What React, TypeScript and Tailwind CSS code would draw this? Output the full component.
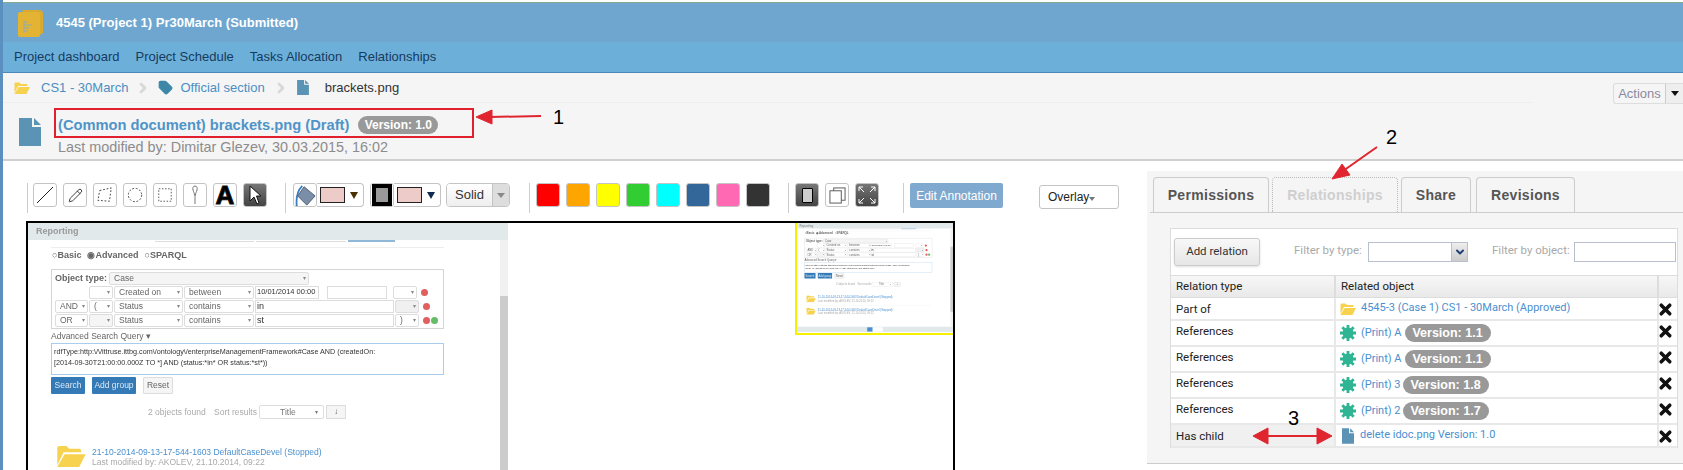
import { ReactNode } from 'react';
import { ChevronRight, Pencil, Tag, X, ChevronDown } from 'lucide-react';

const swatches = ['bg-[#ff0000]', 'bg-[#ffa500]', 'bg-[#ffff00]', 'bg-[#32cd32]', 'bg-[#00ffff]', 'bg-[#336699]', 'bg-[#ff69b4]', 'bg-[#333333]'];

const relations = [
  { type: 'References', name: '(Print) A', version: '1.1', gap: 'ml-[3px]' },
  { type: 'References', name: '(Print) A', version: '1.1', gap: 'ml-[3px]' },
  { type: 'References', name: '(Print) 3', version: '1.8', gap: 'ml-[2px]' },
  { type: 'References', name: '(Print) 2', version: '1.7', gap: 'ml-[2px]' },
];

function DocIcon({ className }: { className: string }) {
  return (
    <svg viewBox="0 0 22 28" className={className} fill="#5b93b5">
      <path d="M0 0H13V9H22V28H0Z" />
      <path d="M15 0L22 7H15Z" />
    </svg>
  );
}

function FolderIcon({ className }: { className: string }) {
  return (
    <svg viewBox="0 0 32 24" className={className} fill="#f7d24f">
      <path d="M1 22V3Q1 1 3 1H11L14 4H25Q27 4 27 6V8H8L1 22Z" />
      <path d="M9 10H32L25 24H1Z" />
    </svg>
  );
}

function StarIcon() {
  return (
    <svg viewBox="0 0 16 16" className="h-[16px] w-[16px] shrink-0" fill="none" stroke="#2fb593" strokeWidth="2.8">
      <circle cx="8" cy="8" r="5.5" fill="#2fb593" stroke="none" />
      <path d="M8 0V16M0 8H16M2.3 2.3L13.7 13.7M13.7 2.3L2.3 13.7" />
    </svg>
  );
}

function ToolBtn({ children, dark }: { children: ReactNode; dark?: boolean }) {
  return (
    <div className={`flex h-[24px] w-[24px] items-center justify-center rounded-[3px] border border-[#c4c4c4] ${dark ? 'bg-gradient-to-b from-[#777777] to-[#444444]' : 'bg-white'}`}>
      {children}
    </div>
  );
}

function Separator() {
  return <div className="h-[30px] w-px shrink-0 bg-[#cccccc]" />;
}

function ColorPick({ caret }: { caret: string }) {
  return (
    <div className="flex h-[24px] w-[47px] items-center rounded-r-[4px] border border-l-0 border-[#c4c4c4] bg-white pl-[3px]">
      <div className="h-[16px] w-[25px] border border-[#222] bg-[#eccbc9]" />
      <svg viewBox="0 0 8 8" className="ml-[5px] h-[8px] w-[8px]"><path d="M0 1H8L4 8Z" fill={caret} /></svg>
    </div>
  );
}

function Toolbar() {
  return (
    <div className="flex h-[38px] items-start pl-[24px]">
      <Separator />
      <div className="ml-[5px] flex gap-[6px]">
        <ToolBtn>
          <svg viewBox="0 0 18 18" className="h-[18px] w-[18px]" stroke="#222" fill="none"><path d="M1 17L17 1" /></svg>
        </ToolBtn>
        <ToolBtn><Pencil className="h-[15px] w-[15px] text-[#333]" strokeWidth={1.5} /></ToolBtn>
        <ToolBtn>
          <svg viewBox="0 0 18 18" className="h-[16px] w-[16px]" stroke="#333" fill="none" strokeDasharray="2 2"><path d="M3 4L16 1L14 16L1 15Z" /></svg>
        </ToolBtn>
        <ToolBtn>
          <svg viewBox="0 0 18 18" className="h-[16px] w-[16px]" stroke="#333" fill="none" strokeDasharray="2 2"><circle cx="9" cy="9" r="7.5" /></svg>
        </ToolBtn>
        <ToolBtn>
          <svg viewBox="0 0 18 18" className="h-[14px] w-[14px]" stroke="#333" fill="none" strokeDasharray="2 2"><rect x="1" y="1" width="16" height="16" /></svg>
        </ToolBtn>
        <ToolBtn>
          <svg viewBox="0 0 12 20" className="h-[20px] w-[12px]" stroke="#555" strokeWidth="0.8" fill="none"><path d="M6 1C4 1 3.500 3 4 5C4.500 7 5.500 8 5.500 10H6.500C6.500 8 7.500 7 8 5C8.500 3 8 1 6 1ZM6 10V19" /></svg>
        </ToolBtn>
        <ToolBtn>
          <span className="text-[26px] font-bold leading-[22px] text-black [-webkit-text-stroke:1px_#111]">A</span>
        </ToolBtn>
        <ToolBtn dark>
          <svg viewBox="0 0 14 20" className="h-[20px] w-[14px]" fill="white" stroke="#111"><path d="M2 1V16L6 12L9 19L11 18L8.500 11H13Z" /></svg>
        </ToolBtn>
      </div>
      <div className="ml-[18px]"><Separator /></div>
      <div className="ml-[7px] flex">
        <ToolBtn>
          <svg viewBox="0 0 24 24" className="h-[22px] w-[22px] shrink-0">
            <path d="M3 24C2 14 5 6 9 2" stroke="#3a80c0" strokeWidth="2" fill="none" />
            <path d="M11 3L23 13L14 23L4 13Z" fill="#7b8ea8" stroke="#4a5a70" />
          </svg>
        </ToolBtn>
        <ColorPick caret="#4a3000" />
      </div>
      <div className="ml-[6px] flex">
        <ToolBtn>
          <div className="flex h-[22px] w-[20px] items-center justify-center bg-black">
            <div className="h-[14px] w-[12px] bg-[#999999]" />
          </div>
        </ToolBtn>
        <ColorPick caret="#10294f" />
      </div>
      <div className="ml-[5px] flex h-[24px] w-[64px] overflow-hidden rounded-[4px] border border-[#c4c4c4] text-[13px] text-[#333]">
        <div className="flex w-[45px] items-center justify-center bg-gradient-to-b from-white to-[#eeeeee]">Solid</div>
        <div className="flex flex-1 items-center justify-center border-l border-[#c4c4c4] bg-[#dddddd]">
          <div className="h-0 w-0 border-x-[4px] border-t-[5px] border-x-transparent border-t-[#888]" />
        </div>
      </div>
      <div className="ml-[19px]"><Separator /></div>
      <div className="ml-[6px] flex gap-[6px]">
        {swatches.map((color) => (
          <div key={color} className={`h-[24px] w-[24px] rounded-[3px] border border-[#c4c4c4] ${color}`} />
        ))}
      </div>
      <div className="ml-[18px]"><Separator /></div>
      <div className="ml-[6px] flex gap-[6px]">
        <ToolBtn dark>
          <div className="h-[15px] w-[11px] rounded-[1px] border border-black bg-[#cccccc]" />
        </ToolBtn>
        <ToolBtn>
          <svg viewBox="0 0 18 18" className="h-[17px] w-[17px]" fill="white" stroke="#555"><rect x="5" y="1" width="12" height="13" /><rect x="1" y="4" width="12" height="13" /></svg>
        </ToolBtn>
        <ToolBtn dark>
          <svg viewBox="0 0 20 20" className="h-[20px] w-[20px]" stroke="white" fill="none"><path d="M2 2L7 7M2 2V6M2 2H6M18 2L13 7M18 2V6M18 2H14M2 18L7 13M2 18V14M2 18H6M18 18L13 13M18 18V14M18 18H14" /></svg>
        </ToolBtn>
      </div>
      <div className="ml-[24px]"><Separator /></div>
      <div className="ml-[6px] flex h-[25px] w-[93px] items-center justify-center rounded-[2px] bg-[#7fa9cf] text-[12px] text-white">Edit Annotation</div>
      <div className="ml-[36px] mt-[2px] flex h-[24px] w-[80px] items-center rounded-[3px] border border-[#c4c4c4] bg-white pl-[8px] text-[12px] text-[#222]">
        Overlay
        <div className="mt-[3px] h-0 w-0 border-x-[3px] border-t-[4px] border-x-transparent border-t-[#777]" />
      </div>
    </div>
  );
}

function Field({ w, children, tone }: { w: string; children?: ReactNode; tone?: string }) {
  return (
    <div className={`flex h-[13px] shrink-0 items-center justify-between rounded-[2px] border border-[#dddddd] pl-[4px] pr-[2px] text-[8.500px] font-normal text-[#666] ${w} ${tone ?? 'bg-white'}`}>
      <span className="whitespace-nowrap">{children}</span>
      <span className="text-[6px] text-[#888]">▾</span>
    </div>
  );
}

function Dot({ color }: { color: string }) {
  return <div className={`h-[7px] w-[7px] shrink-0 rounded-full ${color}`} />;
}

function ResultRow() {
  return (
    <>
      <FolderIcon className="h-[22px] w-[32px] shrink-0" />
      <div className="pt-[2px] text-[8.500px] leading-[10px]">
        <div className="whitespace-nowrap text-[#4a90cf]">21-10-2014-09-13-17-544-1603 DefaultCaseDevel (Stopped)</div>
        <div className="whitespace-nowrap text-[#aaa]">Last modified by: AKOLEV, 21.10.2014, 09:22</div>
      </div>
    </>
  );
}

// The scanned page inside the annotation canvas; the overview shows all of it, the canvas only its top
function ReportPage({ overview }: { overview?: boolean }) {
  return (
    <div className={`relative w-[480px] overflow-hidden bg-white blur-[0.5px] ${overview ? 'h-[336px]' : 'h-[248px]'}`}>
      <div className="flex h-[17px] items-center bg-[#e2e9eb] pl-[8px] text-[9px] font-bold text-[#999]">Reporting</div>
      <div className="absolute bottom-0 right-0 top-[17px] w-[8px] bg-[#f1f1f1]">
        <div className="mt-[56px] h-[200px] bg-[#cccccc]" />
      </div>
      <div className="ml-[23px] w-[393px]">
        <div className="flex h-[8px] gap-[2px] border-b border-[#eeeeee] pl-[104px]">
          <div className="h-[2px] w-[99px] border-b border-[#dddddd]" />
          <div className="h-[2px] w-[90px] border-b border-[#dddddd]" />
          <div className="h-[2px] w-[47px] border-b-2 border-[#8fb7d8]" />
        </div>
        <div className="flex h-[16px] items-center gap-[6px] pl-[1px] text-[9px] font-bold text-[#666]">
          <span>○Basic</span><span>◉Advanced</span><span>○SPARQL</span>
        </div>
        <div className="mt-[5px] h-[60px] border border-[#d5d5d5] px-[3px] pt-[2px]">
          <div className="flex h-[13px] items-center gap-[2px] text-[9px] font-bold text-[#666]">
            Object type:
            <Field w="w-[200px]" tone="bg-[#f5f5f5]">Case</Field>
          </div>
          <div className="flex h-[14px] items-center gap-px pl-[34px]">
            <Field w="w-[24px]" />
            <Field w="w-[69px]">Created on</Field>
            <Field w="w-[70px]">between</Field>
            <div className="flex h-[13px] w-[64px] items-center whitespace-nowrap border border-[#dddddd] pl-px text-[7.500px] text-[#333]">10/01/2014 00:00</div>
            <div className="ml-[7px] h-[13px] w-[60px] border border-[#dddddd]" />
            <div className="ml-[5px]"><Field w="w-[24px]" /></div>
            <div className="ml-[3px]"><Dot color="bg-[#e06060]" /></div>
          </div>
          <div className="mt-[1px] flex h-[13px] items-center gap-px">
            <Field w="w-[33px]">AND</Field>
            <Field w="w-[24px]">(</Field>
            <Field w="w-[69px]">Status</Field>
            <Field w="w-[70px]">contains</Field>
            <div className="h-[13px] w-[139px] border border-[#dddddd] pl-px text-[9px] leading-[11px] text-[#333]">in</div>
            <Field w="w-[24px]" tone="bg-[#f0f0f0]" />
            <div className="ml-[3px]"><Dot color="bg-[#e06060]" /></div>
          </div>
          <div className="mt-px flex h-[13px] items-center gap-px">
            <Field w="w-[33px]">OR</Field>
            <Field w="w-[24px]" tone="bg-[#f5f5f5]" />
            <Field w="w-[69px]">Status</Field>
            <Field w="w-[70px]">contains</Field>
            <div className="h-[13px] w-[139px] border border-[#dddddd] pl-px text-[9px] leading-[11px] text-[#333]">st</div>
            <Field w="w-[24px]">)</Field>
            <div className="ml-[3px] flex gap-px"><Dot color="bg-[#e06060]" /><Dot color="bg-[#66bb66]" /></div>
          </div>
        </div>
        <div className="mt-[2px] flex h-[11px] items-center text-[8.500px] text-[#666]">Advanced Search Query ▾</div>
        <div className="mt-[1px] h-[32px] border border-[#a9cdec] pl-[2px] pt-[2px] text-[7.200px] leading-[11px] text-[#333]">
          <div className="whitespace-nowrap">rdfType:http:\/\/ittruse.ittbg.com\/ontology\/enterpriseManagementFramework#Case AND (createdOn:</div>
          <div className="whitespace-nowrap">[2014-09-30T21:00:00.000Z TO *] AND (status:*in* OR status:*st*))</div>
        </div>
        <div className="mt-[2px] flex gap-[7px] text-[8.500px]">
          <div className="flex h-[17px] w-[34px] items-center justify-center rounded-[1px] bg-[#337ab7] text-[#dfe8f2]">Search</div>
          <div className="flex h-[17px] w-[44px] items-center justify-center rounded-[1px] bg-[#337ab7] text-[#dfe8f2]">Add group</div>
          <div className="flex h-[17px] w-[30px] items-center justify-center rounded-[1px] border border-[#dddddd] bg-[#f5f5f5] text-[#666]">Reset</div>
        </div>
        <div className="mt-[11px] flex h-[14px] items-center whitespace-nowrap pl-[97px] text-[8.500px] text-[#aaa]">
          <span className="w-[66px]">2 objects found</span>
          <span className="w-[45px]">Sort results</span>
          <div className="flex h-[14px] w-[65px] items-center justify-between rounded-[2px] border border-[#dddddd] pl-[20px] pr-[5px] text-[#777]">Title<span className="text-[6px]">▾</span></div>
          <div className="ml-[2px] flex h-[14px] w-[20px] items-center justify-center border border-[#dddddd] bg-[#f5f5f5] text-[8px] leading-none text-[#555]">↓</div>
        </div>
        <div className="mt-[26px] flex gap-[5px] pl-[4px]"><ResultRow /></div>
        {overview && <div className="mt-[10px] flex gap-[5px] border-t border-[#eeeeee] pl-[4px] pt-[5px]"><ResultRow /></div>}
      </div>
      {overview && (
        <div className="absolute bottom-0 left-0 right-0 flex h-[17px] items-center justify-center gap-[2px] bg-[#e2e9eb]">
          <div className="h-[13px] w-[16px] bg-[#4a90cf]" />
          <div className="h-[13px] w-[30px] bg-white" />
        </div>
      )}
    </div>
  );
}

function RelationRow({ type, icon, alt, badge, children }: { type: string; icon: ReactNode; alt?: boolean; badge?: boolean; children: ReactNode }) {
  return (
    <div className={`flex border-b-2 border-[#e8e8e8] text-[#222] ${badge ? 'h-[26px]' : 'h-[23px]'}`}>
      <div className={`w-[163px] shrink-0 pl-[5px] ${badge ? 'pt-[2px]' : 'pt-[3px]'} ${alt ? 'bg-[#f0f0f0]' : 'bg-white'}`}>{type}</div>
      <div className="flex w-[323px] shrink-0 items-center border-l-2 border-[#e8e8e8] bg-white pl-[4px]">
        {icon}
        <div className="ml-[5px] flex items-center whitespace-nowrap text-[11px] text-[#4a90d0]">{children}</div>
      </div>
      <div className={`flex flex-1 border-l-2 border-[#e8e8e8] bg-white ${badge ? 'pt-[2px]' : 'pt-[3px]'}`}>
        <X className="-ml-[2px] h-[17px] w-[17px] text-[#111]" strokeWidth={5} />
      </div>
    </div>
  );
}

function RelationsPanel() {
  return (
    <div className="mt-[10px] flex h-[293px] w-[536px] shrink-0 flex-col border-b border-[#cccccc] bg-[#f5f5f5]">
      <div className="ml-[3px] mt-[7px] flex h-[35px] items-end gap-[3px] border-b border-[#cccccc] pl-[3px] text-[14px] font-bold tracking-[0.3px]">
        <div className="flex h-[35px] w-[116px] items-center justify-center rounded-t-[4px] border border-b-0 border-[#cccccc] text-[#555]">Permissions</div>
        <div className="flex h-[35px] w-[126px] items-center justify-center rounded-t-[4px] border border-b-0 border-dotted border-[#bbbbbb] text-[#cfcfcf]">Relationships</div>
        <div className="flex h-[35px] w-[70px] items-center justify-center rounded-t-[4px] border border-b-0 border-[#cccccc] text-[#555]">Share</div>
        <div className="ml-[2px] flex h-[35px] w-[99px] items-center justify-center rounded-t-[4px] border border-b-0 border-[#cccccc] text-[#555]">Revisions</div>
      </div>
      <div className="ml-[23px] mr-[5px] mt-[15px] border border-b-0 border-[#dddddd] bg-white font-['Roboto',sans-serif] text-[11.500px]">
        <div className="flex h-[46px] items-start whitespace-nowrap pl-[3px] pt-[9px] text-[#aaa]">
          <div className="flex h-[28px] w-[86px] items-center justify-center rounded-[3px] border border-[#cccccc] bg-gradient-to-b from-[#f8f8f8] to-[#e6e6e6] text-[#333] shadow-sm">Add relation</div>
          <span className="ml-[34px] mt-[4px] w-[74px]">Filter by type:</span>
          <div className="mt-[4px] flex h-[20px] w-[100px] justify-end border border-[#b8bfcf] bg-white">
            <div className="flex w-[16px] items-center justify-center border-l border-[#b8bfcf] bg-gradient-to-b from-[#eeeeee] to-[#cccccc]">
              <ChevronDown className="h-[12px] w-[12px] text-[#1f3f77]" strokeWidth={4} />
            </div>
          </div>
          <span className="ml-[24px] mt-[4px] w-[82px]">Filter by object:</span>
          <div className="mt-[4px] h-[20px] w-[102px] border border-[#b8bfcf] bg-white" />
        </div>
        <div className="flex h-[23px] items-center border-y border-[#dddddd] bg-gradient-to-b from-[#f7f7f7] to-[#e9e9e9] text-[#222]">
          <div className="w-[163px] shrink-0 pl-[5px]">Relation type</div>
          <div className="h-full w-[323px] shrink-0 border-l-2 border-[#dddddd] pl-[5px] leading-[21px]">Related object</div>
          <div className="h-full flex-1 border-l-2 border-[#dddddd]" />
        </div>
        <RelationRow type="Part of" icon={<FolderIcon className="h-[12px] w-[16px] shrink-0" />}>
          4545-3 (Case 1) CS1 - 30March (Approved)
        </RelationRow>
        {relations.map((rel, i) => (
          <RelationRow key={i} badge type={rel.type} icon={<StarIcon />}>
            {rel.name}
            <span className={`${rel.gap} flex h-[18px] w-[86px] items-center justify-center rounded-full bg-[#999999] font-['Liberation_Sans',sans-serif] text-[12.500px] font-bold text-white`}>Version: {rel.version}</span>
          </RelationRow>
        ))}
        <RelationRow alt type="Has child" icon={<DocIcon className="ml-[2px] mr-[2px] h-[16px] w-[12px] shrink-0" />}>
          <span className="ml-[-1px]">delete idoc.png Version: 1.0</span>
        </RelationRow>
      </div>
    </div>
  );
}

export default function App() {
  return (
    <div className="relative h-[470px] w-full overflow-hidden border-l-[3px] border-[#5b8fbf] bg-white font-['Liberation_Sans',Arial,sans-serif]">
      {/* Title bar */}
      <div className="-mb-[2px] mt-[2px] flex h-[42px] items-center border-y border-dotted border-b-[#a8d0ea] border-t-[#86ad93] bg-[#6ea6cf] pl-[15px]">
        <svg viewBox="0 0 25 28" className="h-[28px] w-[25px]">
          <path d="M4 1H21Q25 1 25 5V24L22 26V6Q22 3 19 3H5Z" fill="#dca92f" />
          <rect x="0" y="3" width="22" height="25" rx="2" fill="#e3b434" />
          <path d="M6 13H10M6 16H14M6 19H11M6 22H10M6 12V24" stroke="#8eaab5" fill="none" />
        </svg>
        <span className="ml-[13px] text-[13px] font-bold text-white">4545 (Project 1) Pr30March (Submitted)</span>
      </div>
      {/* Nav */}
      <div className="flex h-[31px] items-center gap-[16px] border-b border-[#4a8ab8] bg-[#6cb0da] pl-[11px] text-[13px] text-[#173a5e]">
        <span>Project dashboard</span>
        <span>Project Schedule</span>
        <span>Tasks Allocation</span>
        <span>Relationships</span>
      </div>
      {/* Document header */}
      <div className="flex h-[88px] border-b-2 border-[#d0d0d0] bg-[#f5f5f5]">
        <div className="w-[1530px] shrink-0">
          <div className="flex h-[30px] items-center border-b border-[#eeeeee] pl-[11px] text-[13px]">
            <FolderIcon className="h-[12px] w-[16px]" />
            <span className="ml-[11px] text-[#4a8fc4]">CS1 - 30March</span>
            <ChevronRight className="ml-[7px] h-[16px] w-[16px] text-[#d8d8d8]" strokeWidth={4} />
            <Tag className="ml-[7px] h-[15px] w-[15px] fill-[#3d88a8] text-[#3d88a8]" />
            <span className="ml-[7px] text-[#4a8fc4]">Official section</span>
            <ChevronRight className="ml-[8px] h-[16px] w-[16px] text-[#d8d8d8]" strokeWidth={4} />
            <DocIcon className="ml-[8px] h-[15px] w-[12px]" />
            <span className="ml-[16px] text-[#333]">brackets.png</span>
          </div>
          <div className="flex pl-[16px] pt-[15px]">
            <DocIcon className="h-[28px] w-[22px]" />
            <div className="-mt-[4px] ml-[17px]">
              <div className="flex h-[22px] items-center">
                <span className="text-[14.700px] font-bold text-[#4f94c8]">(Common document) brackets.png (Draft)</span>
                <span className="ml-[9px] flex h-[18px] w-[80px] items-center justify-center rounded-full bg-[#999999] text-[12px] font-bold text-white">Version: 1.0</span>
              </div>
              <div className="mt-[1px] text-[14.400px] text-[#8c8c8c]">Last modified by: Dimitar Glezev, 30.03.2015, 16:02</div>
            </div>
          </div>
        </div>
        <div className="flex flex-1 justify-end pt-[10px]">
          <div className="flex h-[21px] w-[70px] overflow-hidden rounded-l-[3px] border border-r-0 border-[#dddddd] text-[13px] text-[#8a8aa0]">
            <div className="flex w-[51px] items-center justify-center">Actions</div>
            <div className="flex flex-1 items-center justify-center border-l border-[#cccccc] bg-[#eeeeee]">
              <div className="h-0 w-0 border-x-[4px] border-t-[5px] border-x-transparent border-t-[#111]" />
            </div>
          </div>
        </div>
      </div>
      {/* Editor and relations */}
      <div className="flex">
        <div className="w-[1144px] shrink-0 pt-[22px]">
          <Toolbar />
          <div className="ml-[23px] flex h-[300px] w-[929px] items-start border-x-2 border-t-2 border-black">
            <ReportPage />
            <div className="ml-auto h-[112px] w-[158px] overflow-hidden border-b-2 border-l-2 border-[#f5f000] bg-white" aria-hidden>
              <div className="h-[336px] w-[480px] origin-top-left scale-[0.325]"><ReportPage overview /></div>
            </div>
          </div>
        </div>
        <RelationsPanel />
      </div>
      {/* Callouts */}
      <div className="absolute left-[51px] top-[108px] h-[30px] w-[420px] border-2 border-[#e0202c]" />
      <svg className="absolute left-[-3px] top-0 h-[470px] w-[1683px]" viewBox="0 0 1683 470" fill="#e0252f" stroke="#e0252f">
        <path d="M541 116L490 117" strokeWidth="2" />
        <path d="M476 117L492 110V124Z" />
        <path d="M1377 147L1343 171" strokeWidth="2" />
        <path d="M1332 179L1342 164L1350 175Z" />
        <path d="M1265 436H1319" strokeWidth="2" />
        <path d="M1253 436L1268 428V444Z" />
        <path d="M1332 436L1317 428V444Z" />
      </svg>
      <span className="absolute left-[550px] top-[105px] text-[20px] leading-[24px] text-black">1</span>
      <span className="absolute left-[1383px] top-[125px] text-[20px] leading-[24px] text-black">2</span>
      <span className="absolute left-[1285px] top-[406px] text-[20px] leading-[24px] text-black">3</span>
    </div>
  );
}
